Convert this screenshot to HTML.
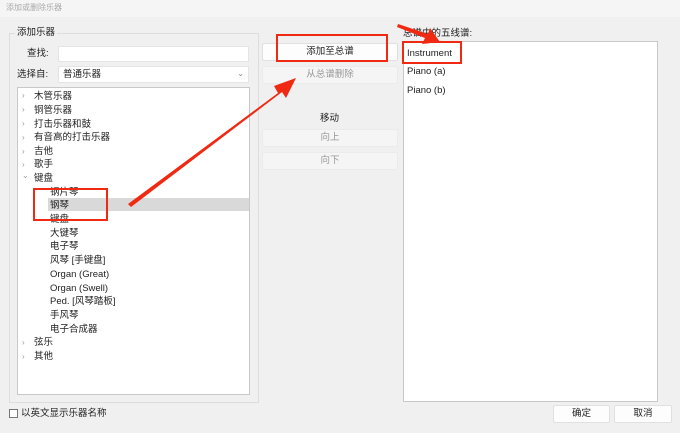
<!DOCTYPE html>
<html><head><style>
body{margin:0;width:680px;height:433px;background:#f0f0f0;font-family:"Liberation Sans","Noto Sans CJK SC",sans-serif;font-size:9.5px;line-height:12px;color:#222;position:relative;overflow:hidden}
.a{position:absolute}
.box{position:absolute;background:#fff;border:1px solid #c8c8c8}
.btn{position:absolute;background:#fdfdfd;border:1px solid #e0e0e0;border-radius:2px;text-align:center;line-height:16px}
.dis{background:#f5f5f5;color:#999;border-color:#ebebeb}
.it{position:absolute;left:34px;white-space:nowrap;margin-top:1px}
.ch{position:absolute;left:50px;white-space:nowrap;margin-top:1px}
.ar{position:absolute;left:22px;color:#999;font-size:8px;margin-top:-1px}
.red{position:absolute;border:2.5px solid #f02a12}
</style></head><body>
<div class="a" style="left:0;top:0;width:680px;height:17px;background:#f5f5f5;color:#aaa;font-size:8px;line-height:16px;padding-left:6px">添加或删除乐器</div>
<div class="a" style="left:9px;top:33px;width:248px;height:368px;border:1px solid #ddd"></div>
<div class="a" style="left:15px;top:27px;background:#f0f0f0;padding:0 2px">添加乐器</div>
<div class="a" style="left:27px;top:48px">查找:</div>
<div class="box" style="left:58px;top:46px;width:189px;height:14px;border-color:#e4e4e4"></div>
<div class="a" style="left:17px;top:69px">选择自:</div>
<div class="box" style="left:58px;top:66px;width:189px;height:15px;border-color:#e4e4e4"><span style="position:absolute;left:4px;top:2px">普通乐器</span><span style="position:absolute;right:4px;top:1px;color:#888;font-size:8px">⌄</span></div>
<div class="box" style="left:17px;top:87px;width:231px;height:306px">
<div class="a" style="left:30px;top:110px;width:201px;height:13px;background:#d9d9d9"></div>
</div>
<div class="ar" style="top:91px">›</div><div class="it" style="top:90px">木管乐器</div>
<div class="ar" style="top:105px">›</div><div class="it" style="top:104px">铜管乐器</div>
<div class="ar" style="top:119px">›</div><div class="it" style="top:118px">打击乐器和鼓</div>
<div class="ar" style="top:133px">›</div><div class="it" style="top:131px">有音高的打击乐器</div>
<div class="ar" style="top:147px">›</div><div class="it" style="top:145px">吉他</div>
<div class="ar" style="top:160px">›</div><div class="it" style="top:158px">歌手</div>
<div class="ar" style="top:171px">⌄</div><div class="it" style="top:172px">键盘</div>
<div class="ch" style="top:186px">钢片琴</div>
<div class="ch" style="top:199px">钢琴</div>
<div class="ch" style="top:213px">键盘</div>
<div class="ch" style="top:227px">大键琴</div>
<div class="ch" style="top:240px">电子琴</div>
<div class="ch" style="top:254px">风琴 [手键盘]</div>
<div class="ch" style="top:268px">Organ (Great)</div>
<div class="ch" style="top:282px">Organ (Swell)</div>
<div class="ch" style="top:295px">Ped. [风琴踏板]</div>
<div class="ch" style="top:309px">手风琴</div>
<div class="ch" style="top:323px">电子合成器</div>
<div class="ar" style="top:338px">›</div><div class="it" style="top:336px">弦乐</div>
<div class="ar" style="top:352px">›</div><div class="it" style="top:350px">其他</div>
<div class="a" style="left:9px;top:409px;width:7px;height:7px;border:1px solid #777;background:#fff"></div>
<div class="a" style="left:21px;top:408px">以英文显示乐器名称</div>
<div class="btn" style="left:262px;top:43px;width:134px;height:16px">添加至总谱</div>
<div class="btn dis" style="left:262px;top:66px;width:134px;height:16px">从总谱删除</div>
<div class="a" style="left:320px;top:113px">移动</div>
<div class="btn dis" style="left:262px;top:129px;width:134px;height:16px">向上</div>
<div class="btn dis" style="left:262px;top:152px;width:134px;height:16px">向下</div>
<div class="a" style="left:403px;top:28px">总谱中的五线谱:</div>
<div class="box" style="left:403px;top:41px;width:253px;height:359px">
<div class="a" style="left:3px;top:6px">Instrument</div>
<div class="a" style="left:3px;top:24px">Piano (a)</div>
<div class="a" style="left:3px;top:43px">Piano (b)</div>
</div>
<div class="btn" style="left:553px;top:405px;width:55px;height:16px">确定</div>
<div class="btn" style="left:614px;top:405px;width:56px;height:16px">取消</div>
<div class="red" style="left:276px;top:34px;width:108px;height:24px"></div>
<div class="red" style="left:33px;top:188px;width:71px;height:29px"></div>
<div class="red" style="left:402px;top:41px;width:56px;height:19px"></div>
<svg class="a" style="left:0;top:0" width="680" height="433">
<polygon points="128,204 278,93 274,86 296,78 286,98 282,92 131,207" fill="#f02a12"/>
<polygon points="398,24 428,34 430,28 440,42 422,44 425,38 397,27" fill="#f02a12"/>
</svg>
</body></html>
